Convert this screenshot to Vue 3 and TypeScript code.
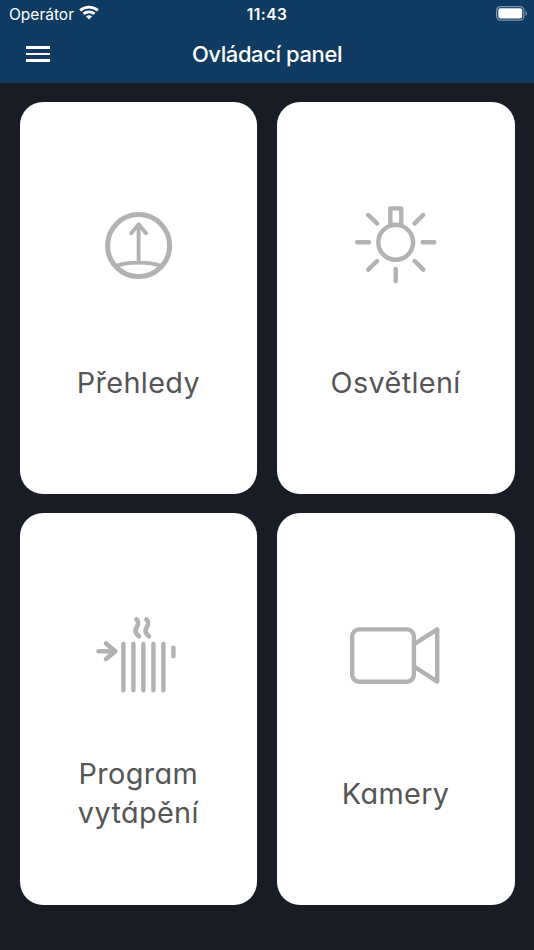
<script setup lang="ts">
type IconName = 'gauge' | 'light' | 'heating' | 'camera'

interface Tile {
  id: IconName
  lines: string[]
}

const tiles: Tile[] = [
  { id: 'gauge', lines: ['Přehledy'] },
  { id: 'light', lines: ['Osvětlení'] },
  { id: 'heating', lines: ['Program', 'vytápění'] },
  { id: 'camera', lines: ['Kamery'] },
]
</script>

<template>
  <div class="screen">
    <header class="header">
      <div class="status">
        <div class="carrier">
          <span>Operátor</span>
          <svg class="wifi" width="20" height="15" viewBox="0 0 20 15">
            <g fill="none" stroke="#fff" stroke-width="2.8">
              <path d="M1.2 5.4C6.2 .9 13.8 .9 18.8 5.4" />
              <path d="M4.5 8.9C7.6 6.1 12.4 6.1 15.5 8.9" />
            </g>
            <path d="M6.9 11.4C8.7 9.8 11.3 9.8 13.1 11.4L10 14.5Z" fill="#fff" />
          </svg>
        </div>
        <span class="clock">11:43</span>
        <div class="power">
          <svg width="32" height="15" viewBox="0 0 32 15">
            <rect x="0.6" y="0.6" width="27.3" height="13.6" rx="3.9" fill="none" stroke="#8096af" stroke-width="1.2" />
            <rect x="2.3" y="2.3" width="23.9" height="10.2" rx="2.1" fill="#fff" />
            <path d="M29.5 5C31.5 5.8 31.5 9 29.5 9.8Z" fill="#8096af" />
          </svg>
        </div>
      </div>
      <div class="toolbar">
        <button class="menu" aria-label="Menu">
          <span></span><span></span><span></span>
        </button>
        <h1 class="title">Ovládací panel</h1>
      </div>
    </header>

    <main class="grid">
      <section v-for="tile in tiles" :key="tile.id" class="tile">
        <svg class="icon" viewBox="0 0 110 100">
          <g v-if="tile.id === 'gauge'" transform="translate(0.4 0.3)">
            <circle cx="55.2" cy="50.3" r="31" stroke-width="5" />
            <path stroke-width="3.8" d="M55.2 29V67M47.9 37.9L55.2 29L62.6 37.9M33 70.4C45 66.4 65.4 66.4 77.4 70.4" />
          </g>
          <g v-else-if="tile.id === 'light'" transform="translate(-0.5 0)">
            <circle cx="55.2" cy="47.3" r="17.4" />
            <path d="M49.8 30V13.4H60.8V30Z" />
            <path d="M16.6 47.3H28.5M82.2 47.3H93.8M55.2 74V86M27.8 20L36.5 28.4M82.6 20L74.2 28.4M27.8 74.6L36.5 66M82.8 74.6L74.2 66" />
          </g>
          <g v-else-if="tile.id === 'heating'" transform="translate(0.3 0)">
            <path d="M40.1 38V84.3M50.1 38V84.3M60.1 38V84.3M70.1 38V84.3M80.1 38V84.3M90.1 41.6V50.2" />
            <path stroke-width="4.6" d="M15.2 45.3H32M22.7 37.4L32 45.3L22.7 53" />
            <path stroke-width="4.6" d="M53.1 13.4C59.5 20 46.5 22.5 55.6 30.2M63.1 13.4C69.5 20 56.5 22.5 65.6 30.2" />
          </g>
          <g v-else transform="translate(-0.5 0)">
            <rect x="11.7" y="23.4" width="61.7" height="52.3" rx="7" />
            <path d="M74.4 37.7L96.7 23.4V75.6L74.4 61" />
          </g>
        </svg>
        <div class="label">
          <span v-for="line in tile.lines" :key="line">{{ line }}</span>
        </div>
      </section>
    </main>
  </div>
</template>

<style>
body {
  margin: 0;
  background: #181c25;
}
</style>

<style scoped>
.screen {
  box-sizing: border-box;
  width: 100%;
  height: 950px;
  overflow: hidden;
  background: #181c25;
  font-family: Inter, 'Liberation Sans', sans-serif;
}
.header {
  height: 82.6px;
  background: #0f3b62;
  color: #fff;
}
.status {
  display: grid;
  grid-template-columns: 1fr auto 1fr;
  align-items: center;
  height: 28px;
}
.carrier {
  display: flex;
  align-items: center;
  gap: 5px;
  padding-left: 9px;
  font-size: 15.5px;
}
.wifi {
  margin-top: -3px;
}
.clock {
  font-size: 15.5px;
  font-weight: 600;
  letter-spacing: 0.45px;
}
.power {
  display: flex;
  justify-content: flex-end;
  padding: 0 6.5px 1px 0;
}
.toolbar {
  display: grid;
  grid-template-columns: 76px 1fr 76px;
  align-items: center;
  height: 52px;
}
.menu {
  display: grid;
  gap: 3.5px;
  width: 24px;
  margin-left: 26px;
  padding: 0;
  border: 0;
  background: none;
}
.menu span {
  height: 2.9px;
  background: #fff;
}
.title {
  margin: 0;
  text-align: center;
  font-size: 22px;
  font-weight: 550;
  line-height: 30px;
  letter-spacing: -0.4px;
}
.grid {
  display: grid;
  grid-template-columns: 1fr 1fr;
  grid-auto-rows: 391.5px;
  gap: 19.5px;
  padding: 19.5px;
}
.tile {
  display: flex;
  flex-direction: column;
  align-items: center;
  box-sizing: border-box;
  padding-top: 93px;
  border-radius: 23px;
  background: #fff;
}
.icon {
  width: 110px;
  height: 100px;
  fill: none;
  stroke: #b2b2b2;
  stroke-width: 4.4;
  stroke-linecap: round;
  stroke-linejoin: round;
}
.label {
  display: flex;
  flex-direction: column;
  justify-content: center;
  align-items: center;
  height: 80px;
  margin-top: 47.2px;
  color: #555;
  font-size: 28.8px;
  font-weight: 400;
  line-height: 39.5px;
  letter-spacing: 0.38px;
  font-feature-settings: 'cv11' 1;
}
</style>
